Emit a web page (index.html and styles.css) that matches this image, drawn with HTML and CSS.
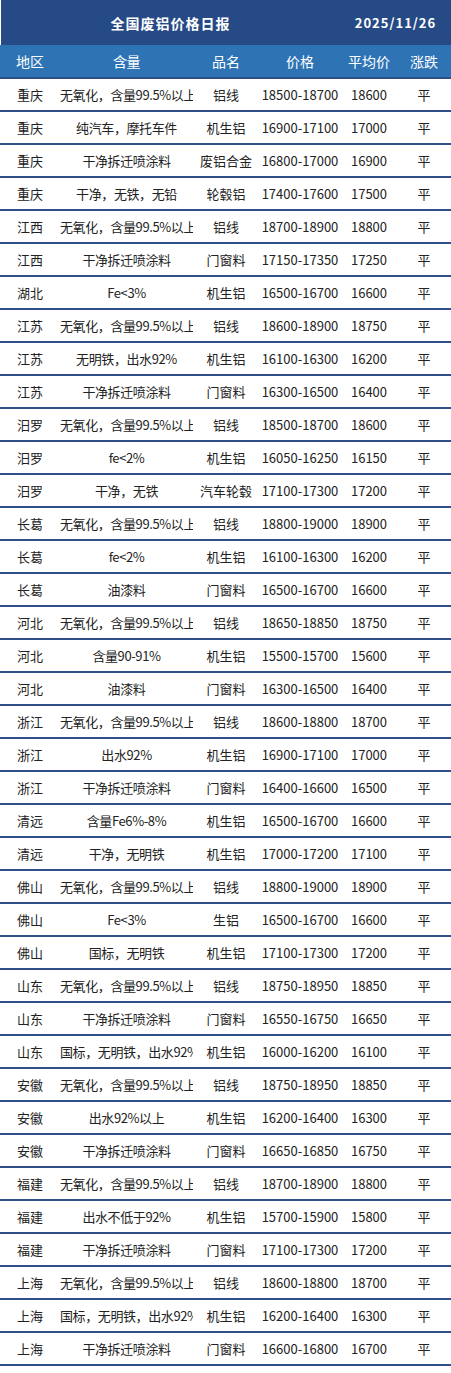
FILE: index.html
```html
<!DOCTYPE html>
<html lang="zh-CN">
<head>
<meta charset="utf-8">
<title>全国废铝价格日报</title>
<link rel="stylesheet" href="styles.css">
</head>
<body>
<div class="report">
  <div class="titlebar">
    <div class="title">全国废铝价格日报</div>
    <div class="date">2025/11/26</div>
  </div>
  <div class="row head">
    <div class="c">地区</div><div class="c">含量</div><div class="c">品名</div><div class="c">价格</div><div class="c">平均价</div><div class="c">涨跌</div>
  </div>
  <div class="row"><div class="c">重庆</div><div class="c">无氧化，含量99.5%以上</div><div class="c">铝线</div><div class="c">18500-18700</div><div class="c">18600</div><div class="c">平</div></div>
  <div class="row"><div class="c">重庆</div><div class="c">纯汽车，摩托车件</div><div class="c">机生铝</div><div class="c">16900-17100</div><div class="c">17000</div><div class="c">平</div></div>
  <div class="row"><div class="c">重庆</div><div class="c">干净拆迁喷涂料</div><div class="c">废铝合金</div><div class="c">16800-17000</div><div class="c">16900</div><div class="c">平</div></div>
  <div class="row"><div class="c">重庆</div><div class="c">干净，无铁，无铅</div><div class="c">轮毂铝</div><div class="c">17400-17600</div><div class="c">17500</div><div class="c">平</div></div>
  <div class="row"><div class="c">江西</div><div class="c">无氧化，含量99.5%以上</div><div class="c">铝线</div><div class="c">18700-18900</div><div class="c">18800</div><div class="c">平</div></div>
  <div class="row"><div class="c">江西</div><div class="c">干净拆迁喷涂料</div><div class="c">门窗料</div><div class="c">17150-17350</div><div class="c">17250</div><div class="c">平</div></div>
  <div class="row"><div class="c">湖北</div><div class="c">Fe&lt;3%</div><div class="c">机生铝</div><div class="c">16500-16700</div><div class="c">16600</div><div class="c">平</div></div>
  <div class="row"><div class="c">江苏</div><div class="c">无氧化，含量99.5%以上</div><div class="c">铝线</div><div class="c">18600-18900</div><div class="c">18750</div><div class="c">平</div></div>
  <div class="row"><div class="c">江苏</div><div class="c">无明铁，出水92%</div><div class="c">机生铝</div><div class="c">16100-16300</div><div class="c">16200</div><div class="c">平</div></div>
  <div class="row"><div class="c">江苏</div><div class="c">干净拆迁喷涂料</div><div class="c">门窗料</div><div class="c">16300-16500</div><div class="c">16400</div><div class="c">平</div></div>
  <div class="row"><div class="c">汨罗</div><div class="c">无氧化，含量99.5%以上</div><div class="c">铝线</div><div class="c">18500-18700</div><div class="c">18600</div><div class="c">平</div></div>
  <div class="row"><div class="c">汨罗</div><div class="c">fe&lt;2%</div><div class="c">机生铝</div><div class="c">16050-16250</div><div class="c">16150</div><div class="c">平</div></div>
  <div class="row"><div class="c">汨罗</div><div class="c">干净，无铁</div><div class="c">汽车轮毂</div><div class="c">17100-17300</div><div class="c">17200</div><div class="c">平</div></div>
  <div class="row"><div class="c">长葛</div><div class="c">无氧化，含量99.5%以上</div><div class="c">铝线</div><div class="c">18800-19000</div><div class="c">18900</div><div class="c">平</div></div>
  <div class="row"><div class="c">长葛</div><div class="c">fe&lt;2%</div><div class="c">机生铝</div><div class="c">16100-16300</div><div class="c">16200</div><div class="c">平</div></div>
  <div class="row"><div class="c">长葛</div><div class="c">油漆料</div><div class="c">门窗料</div><div class="c">16500-16700</div><div class="c">16600</div><div class="c">平</div></div>
  <div class="row"><div class="c">河北</div><div class="c">无氧化，含量99.5%以上</div><div class="c">铝线</div><div class="c">18650-18850</div><div class="c">18750</div><div class="c">平</div></div>
  <div class="row"><div class="c">河北</div><div class="c">含量90-91%</div><div class="c">机生铝</div><div class="c">15500-15700</div><div class="c">15600</div><div class="c">平</div></div>
  <div class="row"><div class="c">河北</div><div class="c">油漆料</div><div class="c">门窗料</div><div class="c">16300-16500</div><div class="c">16400</div><div class="c">平</div></div>
  <div class="row"><div class="c">浙江</div><div class="c">无氧化，含量99.5%以上</div><div class="c">铝线</div><div class="c">18600-18800</div><div class="c">18700</div><div class="c">平</div></div>
  <div class="row"><div class="c">浙江</div><div class="c">出水92%</div><div class="c">机生铝</div><div class="c">16900-17100</div><div class="c">17000</div><div class="c">平</div></div>
  <div class="row"><div class="c">浙江</div><div class="c">干净拆迁喷涂料</div><div class="c">门窗料</div><div class="c">16400-16600</div><div class="c">16500</div><div class="c">平</div></div>
  <div class="row"><div class="c">清远</div><div class="c">含量Fe6%-8%</div><div class="c">机生铝</div><div class="c">16500-16700</div><div class="c">16600</div><div class="c">平</div></div>
  <div class="row"><div class="c">清远</div><div class="c">干净，无明铁</div><div class="c">机生铝</div><div class="c">17000-17200</div><div class="c">17100</div><div class="c">平</div></div>
  <div class="row"><div class="c">佛山</div><div class="c">无氧化，含量99.5%以上</div><div class="c">铝线</div><div class="c">18800-19000</div><div class="c">18900</div><div class="c">平</div></div>
  <div class="row"><div class="c">佛山</div><div class="c">Fe&lt;3%</div><div class="c">生铝</div><div class="c">16500-16700</div><div class="c">16600</div><div class="c">平</div></div>
  <div class="row"><div class="c">佛山</div><div class="c">国标，无明铁</div><div class="c">机生铝</div><div class="c">17100-17300</div><div class="c">17200</div><div class="c">平</div></div>
  <div class="row"><div class="c">山东</div><div class="c">无氧化，含量99.5%以上</div><div class="c">铝线</div><div class="c">18750-18950</div><div class="c">18850</div><div class="c">平</div></div>
  <div class="row"><div class="c">山东</div><div class="c">干净拆迁喷涂料</div><div class="c">门窗料</div><div class="c">16550-16750</div><div class="c">16650</div><div class="c">平</div></div>
  <div class="row"><div class="c">山东</div><div class="c">国标，无明铁，出水92%</div><div class="c">机生铝</div><div class="c">16000-16200</div><div class="c">16100</div><div class="c">平</div></div>
  <div class="row"><div class="c">安徽</div><div class="c">无氧化，含量99.5%以上</div><div class="c">铝线</div><div class="c">18750-18950</div><div class="c">18850</div><div class="c">平</div></div>
  <div class="row"><div class="c">安徽</div><div class="c">出水92%以上</div><div class="c">机生铝</div><div class="c">16200-16400</div><div class="c">16300</div><div class="c">平</div></div>
  <div class="row"><div class="c">安徽</div><div class="c">干净拆迁喷涂料</div><div class="c">门窗料</div><div class="c">16650-16850</div><div class="c">16750</div><div class="c">平</div></div>
  <div class="row"><div class="c">福建</div><div class="c">无氧化，含量99.5%以上</div><div class="c">铝线</div><div class="c">18700-18900</div><div class="c">18800</div><div class="c">平</div></div>
  <div class="row"><div class="c">福建</div><div class="c">出水不低于92%</div><div class="c">机生铝</div><div class="c">15700-15900</div><div class="c">15800</div><div class="c">平</div></div>
  <div class="row"><div class="c">福建</div><div class="c">干净拆迁喷涂料</div><div class="c">门窗料</div><div class="c">17100-17300</div><div class="c">17200</div><div class="c">平</div></div>
  <div class="row"><div class="c">上海</div><div class="c">无氧化，含量99.5%以上</div><div class="c">铝线</div><div class="c">18600-18800</div><div class="c">18700</div><div class="c">平</div></div>
  <div class="row"><div class="c">上海</div><div class="c">国标，无明铁，出水92%</div><div class="c">机生铝</div><div class="c">16200-16400</div><div class="c">16300</div><div class="c">平</div></div>
  <div class="row"><div class="c">上海</div><div class="c">干净拆迁喷涂料</div><div class="c">门窗料</div><div class="c">16600-16800</div><div class="c">16700</div><div class="c">平</div></div>
</div>
</body>
</html>
```
FILE: styles.css
```css
html, body {
  margin: 0;
  padding: 0;
  background: #ffffff;
}
body {
  font-family: "Noto Sans CJK SC", "Noto Sans", sans-serif;
  font-size: 13px;
  color: #222222;
}
.report {
  width: 451px;
}
.titlebar {
  display: flex;
  height: 45px;
  margin-left: 1px;
  background: #254a86;
  color: #ffffff;
  font-weight: bold;
  align-items: center;
}
.title {
  width: 339px;
  text-align: center;
  font-size: 14px;
  letter-spacing: 1px;
}
.date {
  width: 111px;
  text-align: center;
  font-size: 13px;
  letter-spacing: 1px;
}
.row {
  display: grid;
  grid-template-columns: 60px 133px 66px 82px 56px 54px;
  height: 33px;
  box-sizing: border-box;
  border-bottom: 2px solid #2f4f88;
}
.row.head {
  height: 34px;
  background: #2e74b5;
  color: #ffffff;
  font-size: 14px;
}
.row.head .c {
  line-height: 32px;
  letter-spacing: 0;
}
.c {
  text-align: center;
  line-height: 31px;
  white-space: nowrap;
  overflow: hidden;
}
.row .c:nth-child(2) {
  letter-spacing: -0.4px;
}
```
